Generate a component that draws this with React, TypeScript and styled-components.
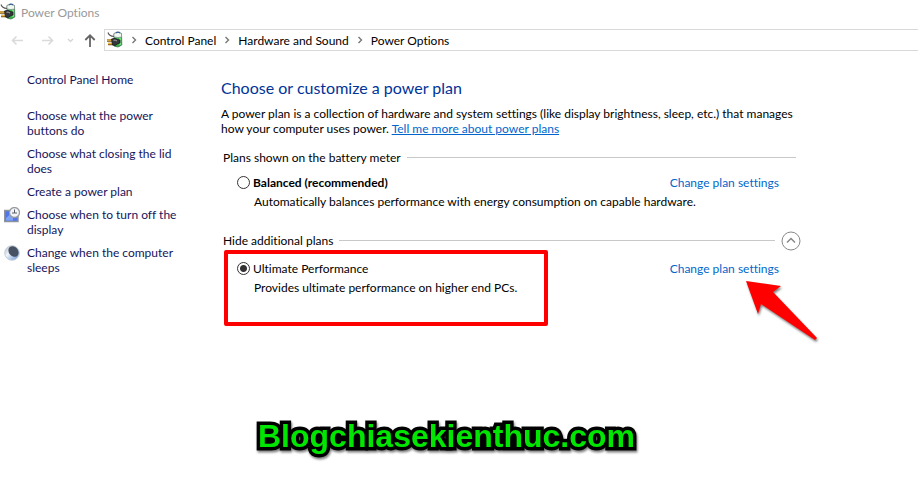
import React from 'react';
import styled, { createGlobalStyle } from 'styled-components';

const Global = createGlobalStyle`
  *, *::before, *::after { box-sizing: border-box; }
  body {
    margin: 0;
    background: #fff;
    color: #000;
    font: 12px/15px Lato, "Open Sans", sans-serif;
    font-variant-ligatures: none;
  }
`;

const Window = styled.div`
  position: relative;
  min-height: 100vh;
  overflow: hidden;
`;

const TitleBar = styled.header`
  display: flex;
  align-items: center;
  gap: 5px;
  height: 24px;
  color: #999;
`;

const NavBar = styled.nav`
  display: flex;
  align-items: center;
  height: 32px;
`;

const NavButton = styled.button<{ $width: number }>`
  display: flex;
  align-items: center;
  justify-content: center;
  width: ${(p) => p.$width}px;
  height: 22px;
  padding: 0;
  border: 0;
  background: none;
`;

const AddressBar = styled.ol`
  display: flex;
  align-items: center;
  flex: 1;
  height: 22px;
  margin: 0 0 0 4px;
  padding: 0 2px;
  border: 1px solid #d9d9d9;
  border-right: 0;
  list-style: none;
`;

const Crumb = styled.li`
  display: flex;
  align-items: center;
`;

const CrumbLink = styled.a`
  color: #000;
  text-decoration: none;
`;

const Separator = styled.svg`
  width: 6px;
  height: 8px;
  margin: 0 8px;
`;

const Body = styled.div`
  display: grid;
  grid-template-columns: 221px minmax(0, 580px);
`;

const Sidebar = styled.aside`
  display: flex;
  flex-direction: column;
  gap: 8px;
  padding: 16px 40px 0 4px;
`;

const Task = styled.a<{ $home?: boolean }>`
  display: grid;
  grid-template-columns: 16px 1fr;
  gap: 7px;
  margin-bottom: ${(p) => (p.$home ? 13 : 0)}px;
  color: #15155c;
  text-decoration: none;
`;

const TaskText = styled.span`
  grid-column: 2;
`;

const Main = styled.main`
  padding-top: 22px;
`;

const Heading = styled.h1`
  margin: 0 0 8px;
  color: #003399;
  font-size: 16px;
  line-height: 20px;
  font-weight: 400;
`;

const Intro = styled.p`
  margin: 0 0 14px;
`;

const Link = styled.a<{ $underlined?: boolean }>`
  color: #0066cc;
  text-decoration: ${(p) => (p.$underlined ? 'underline' : 'none')};
`;

const Group = styled.section`
  padding: 0 0 0 2px;
`;

const GroupHeader = styled.div`
  display: flex;
  align-items: center;
  gap: 6px;
  height: 15px;
`;

const GroupTitle = styled.h2`
  margin: 0;
  font-size: 12px;
  line-height: 15px;
  font-weight: 400;
`;

const Rule = styled.span<{ $end?: boolean }>`
  flex: 1;
  height: 1px;
  margin-right: ${(p) => (p.$end ? 5 : 0)}px;
  background: #c8c8c8;
`;

const Collapse = styled.button`
  display: flex;
  padding: 0;
  border: 0;
  background: none;
`;

const Plan = styled.div<{ $last?: boolean }>`
  display: grid;
  grid-template-columns: 13px 1fr auto;
  column-gap: 3px;
  row-gap: 4px;
  align-items: center;
  padding: ${(p) => (p.$last ? 13 : 10)}px 22px 24px 14px;
`;

const Radio = styled.input`
  appearance: none;
  width: 13px;
  height: 13px;
  margin: 0;
  border: 1px solid #333;
  border-radius: 50%;
  background: #fff;
  &:checked {
    background: radial-gradient(circle, #333 3px, #fff 4px);
  }
`;

const PlanName = styled.label<{ $bold?: boolean }>`
  font-weight: ${(p) => (p.$bold ? 700 : 400)};
`;

const PlanDetail = styled.p`
  grid-column: 2 / -1;
  margin: 0;
  padding-left: 1px;
`;

const Highlight = styled.div`
  position: absolute;
  top: 250px;
  left: 224px;
  width: 324px;
  height: 76px;
  border: 4px solid #f00;
  border-radius: 2px;
  pointer-events: none;
`;

const Pointer = styled.svg`
  position: absolute;
  top: 276px;
  left: 740px;
  width: 84px;
  height: 72px;
  pointer-events: none;
  filter: drop-shadow(1px 2px 1px rgba(0, 0, 0, 0.5));
`;

const Watermark = styled.div`
  position: absolute;
  top: 416px;
  left: 258px;
  color: #00e600;
  font: 700 32px/40px "Liberation Sans", Arial, sans-serif;
  -webkit-text-stroke: 7px #000;
  paint-order: stroke fill;
  stroke-linejoin: round;
  filter: drop-shadow(1px 2px 1px rgba(0, 0, 0, 0.5));
`;

const PowerIcon = () => (
  <svg width="16" height="18" viewBox="0 0 16 18" aria-hidden="true">
    <path d="M7 2.5Q11 0 14.5 2.5L14.8 14Q11 17.5 7 15Z" fill="#35b548" stroke="#4b7457" strokeWidth=".8" />
    <path d="M7 2.5Q11 .3 14.5 2.5V6Q11 7 7 6Z" fill="#eef7f2" stroke="#829189" strokeWidth=".7" />
    <path d="M9 1.6Q11 .6 13 1.6" stroke="#3d5c9c" strokeWidth="1.2" fill="none" />
    <path d="M13 7V14" stroke="#8cec93" strokeWidth="1.4" />
    <path d="M1 1.5Q2 5 7 5.5" fill="none" stroke="#555" strokeWidth="1.1" />
    <path d="M0 9.5H5M1 13H6" stroke="#7b5412" strokeWidth="2.4" />
    <path d="M0 9.2H5M1 12.7H6" stroke="#efbd46" strokeWidth="1.2" />
    <path d="M4.5 8Q8 6.5 10.5 8.5L13 9V12L10.5 13Q8 15.5 5.5 14Z" fill="#35383b" stroke="#151719" strokeWidth=".7" />
    <path d="M6.5 9.3Q8 8.5 10 10" fill="none" stroke="#aaa" />
  </svg>
);

const DisplayIcon = () => (
  <svg width="16" height="16" viewBox="0 0 16 16" aria-hidden="true">
    <path d="M.7 3.5H14V14.5H.7Z" fill="#4f75e8" stroke="#8d929b" strokeWidth="1.4" />
    <path d="M2 11L9 5V13.5H2Z" fill="#7ea2f6" />
    <circle cx="10.5" cy="5.5" r="5" fill="#f3f5f7" stroke="#989da3" strokeWidth="1.3" />
    <path d="M10.5 2.5V6H13M8 6H10.5" fill="none" stroke="#555e68" />
  </svg>
);

const SleepIcon = () => (
  <svg width="16" height="16" viewBox="0 0 16 16" aria-hidden="true">
    <defs>
      <linearGradient id="moon" x1="0" y1="0" x2="1" y2="1">
        <stop offset="0" stopColor="#aeb8c2" />
        <stop offset=".4" stopColor="#eef5fb" />
        <stop offset="1" stopColor="#5b8bd0" />
      </linearGradient>
    </defs>
    <circle cx="8" cy="8" r="7.3" fill="url(#moon)" stroke="#c5ced8" />
    <ellipse cx="9.5" cy="6.5" rx="4.6" ry="5.8" transform="rotate(-40 9.5 6.5)" fill="#465264" />
  </svg>
);

const Arrow = ({ left }: { left?: boolean }) => (
  <svg width="13" height="11" viewBox="0 0 13 11" fill="none" stroke="#dadada" strokeWidth="1.6" aria-hidden="true">
    <path d={left ? 'M12 5.5H1.5M5.5 1.5L1.5 5.5L5.5 9.5' : 'M1 5.5H11.5M7.5 1.5L11.5 5.5L7.5 9.5'} />
  </svg>
);

const tasks = [
  { text: 'Control Panel Home', home: true },
  { text: 'Choose what the power buttons do' },
  { text: 'Choose what closing the lid does' },
  { text: 'Create a power plan' },
  { text: 'Choose when to turn off the display', icon: <DisplayIcon /> },
  { text: 'Change when the computer sleeps', icon: <SleepIcon /> },
];

export default function App() {
  return (
    <Window>
      <Global />
      <TitleBar><PowerIcon />Power Options</TitleBar>
      <NavBar aria-label="Location">
        <NavButton $width={34} aria-label="Back"><Arrow left /></NavButton>
        <NavButton $width={26} aria-label="Forward"><Arrow /></NavButton>
        <NavButton $width={20} aria-label="Recent locations">
          <svg width="7" height="5" viewBox="0 0 7 5" fill="none" stroke="#d5d5d5" strokeWidth="1.3"><path d="M1 1L3.5 3.5L6 1" /></svg>
        </NavButton>
        <NavButton $width={20} aria-label="Up">
          <svg width="12" height="13" viewBox="0 0 12 13" fill="none" stroke="#666" strokeWidth="1.8"><path d="M6 13V1.5M1.3 6L6 1.3L10.7 6" /></svg>
        </NavButton>
        <AddressBar>
          <PowerIcon />
          {['Control Panel', 'Hardware and Sound', 'Power Options'].map((name) => (
            <Crumb key={name}>
              <Separator viewBox="0 0 6 8" fill="none" stroke="#777" strokeWidth="1.4"><path d="M1.5 1L4.5 4L1.5 7" /></Separator>
              <CrumbLink href="#">{name}</CrumbLink>
            </Crumb>
          ))}
        </AddressBar>
      </NavBar>
      <Body>
        <Sidebar>
          {tasks.map((t) => (
            <Task key={t.text} href="#" $home={t.home}>{t.icon}<TaskText>{t.text}</TaskText></Task>
          ))}
        </Sidebar>
        <Main>
          <Heading>Choose or customize a power plan</Heading>
          <Intro>
            A power plan is a collection of hardware and system settings (like display brightness, sleep, etc.) that manages how your computer uses power. <Link href="#" $underlined>Tell me more about power plans</Link>
          </Intro>
          <Group>
            <GroupHeader><GroupTitle>Plans shown on the battery meter</GroupTitle><Rule $end /></GroupHeader>
            <Plan>
              <Radio type="radio" name="plan" id="balanced" />
              <PlanName htmlFor="balanced" $bold>Balanced (recommended)</PlanName>
              <Link href="#">Change plan settings</Link>
              <PlanDetail>Automatically balances performance with energy consumption on capable hardware.</PlanDetail>
            </Plan>
          </Group>
          <Group>
            <GroupHeader>
              <GroupTitle>Hide additional plans</GroupTitle><Rule />
              <Collapse aria-label="Hide additional plans">
                <svg width="20" height="20" viewBox="0 0 20 20" fill="none" stroke="#888"><circle cx="10" cy="10" r="9" /><path d="M6 11.5L10 7.5L14 11.5" strokeWidth="1.5" /></svg>
              </Collapse>
            </GroupHeader>
            <Plan $last>
              <Radio type="radio" name="plan" id="ultimate" defaultChecked />
              <PlanName htmlFor="ultimate">Ultimate Performance</PlanName>
              <Link href="#">Change plan settings</Link>
              <PlanDetail>Provides ultimate performance on higher end PCs.</PlanDetail>
            </Plan>
          </Group>
        </Main>
      </Body>
      <Highlight />
      <Pointer viewBox="0 0 84 72" aria-hidden="true"><path d="M6 5L41 10L33 16L77 62L75 64L21 28L18 38Z" fill="#f00" /></Pointer>
      <Watermark>Blogchiasekienthuc.com</Watermark>
    </Window>
  );
}
